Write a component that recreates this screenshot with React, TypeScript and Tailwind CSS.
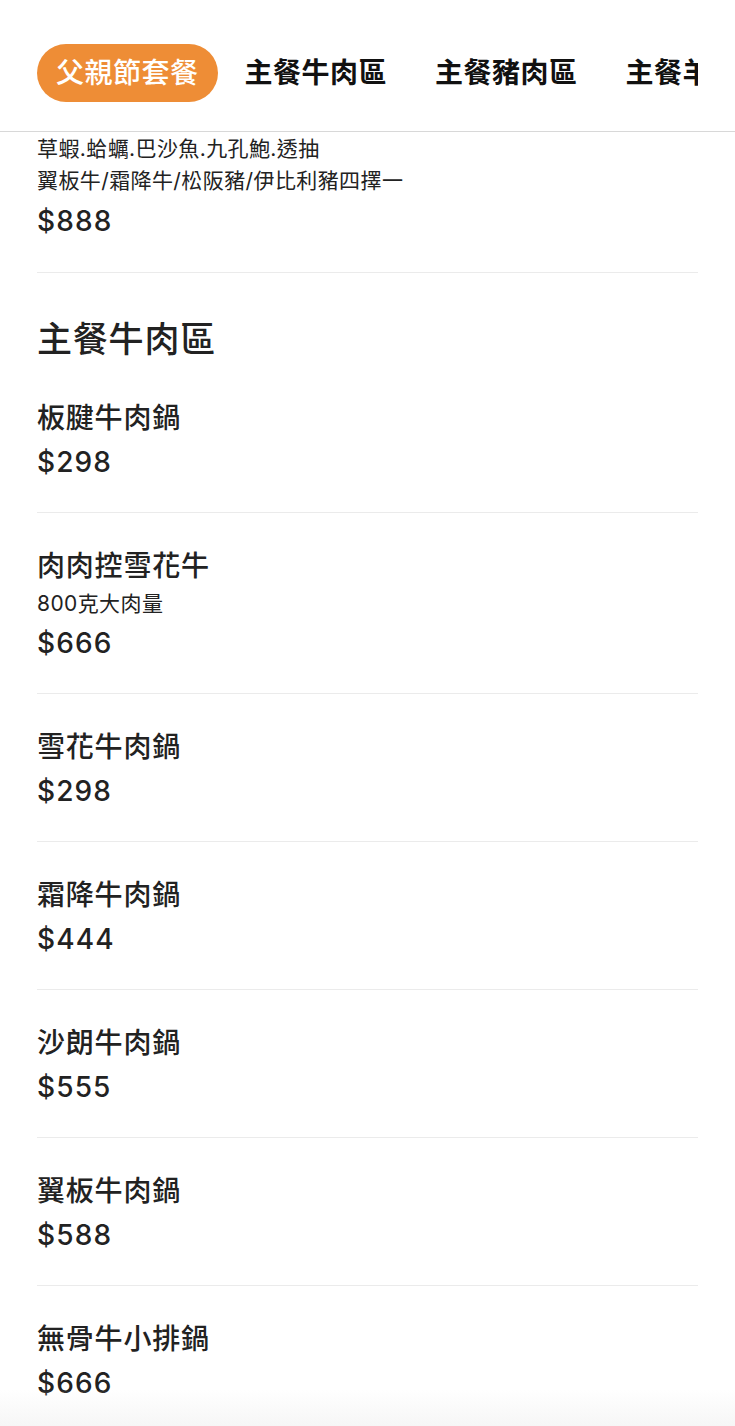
import React from "react";

const font = {
  fontFamily: 'Inter, "Noto Sans CJK TC", "Noto Sans CJK SC", sans-serif',
};

type Item = { name: string; desc?: string; price: string };

const items: Item[] = [
  { name: "板腱牛肉鍋", price: "$298" },
  { name: "肉肉控雪花牛", desc: "800克大肉量", price: "$666" },
  { name: "雪花牛肉鍋", price: "$298" },
  { name: "霜降牛肉鍋", price: "$444" },
  { name: "沙朗牛肉鍋", price: "$555" },
  { name: "翼板牛肉鍋", price: "$588" },
  { name: "無骨牛小排鍋", price: "$666" },
];

function Price({ children }: { children: React.ReactNode }) {
  return (
    <div className="text-[28px] leading-[40px] font-medium tracking-[0.04em] text-[#222]">
      {children}
    </div>
  );
}

function MenuItem({ item, last }: { item: Item; last?: boolean }) {
  return (
    <div
      className={`pt-[33px] pb-[30px] ${last ? "" : "border-b border-[#ebebeb]"}`}
    >
      <div className="text-[28px] leading-[40px] font-medium text-[#222] tracking-[0.8px]">
        {item.name}
      </div>
      {item.desc && (
        <div className="mt-[2px] text-[21px] leading-[32px] text-[#222] tracking-[0.4px]">
          {item.desc}
        </div>
      )}
      <div className={item.desc ? "mt-[3px]" : "mt-[4px]"}>
        <Price>{item.price}</Price>
      </div>
    </div>
  );
}

export default function App() {
  const tabs = ["父親節套餐", "主餐牛肉區", "主餐豬肉區", "主餐羊肉區", "海鮮區"];
  return (
    <div className="relative min-h-[1426px] bg-white overflow-hidden" style={font}>
      <header className="h-[132px] border-b border-[#d8d8d8] flex items-center">
        <div className="mx-[37px] w-[661px] overflow-hidden mt-[15px]">
          <div className="flex whitespace-nowrap">
            {tabs.map((t, i) => (
              <div
                key={t}
                className={`h-[58px] flex items-center rounded-full text-[28px] tracking-[0.5px] shrink-0 ${
                  i === 0
                    ? "bg-[#ee8d36] text-white font-medium px-[19px] mr-[3px]"
                    : "text-[#111] font-bold px-[24px]"
                }`}
              >
                {t}
              </div>
            ))}
          </div>
        </div>
      </header>

      <main className="px-[37px]">
        <div className="pb-[31px] border-b border-[#ebebeb]">
          <div className="text-[21px] leading-[32px] text-[#222] tracking-[0.4px] pt-px">
            草蝦.蛤蠣.巴沙魚.九孔鮑.透抽
          </div>
          <div className="text-[21px] leading-[32px] text-[#222] tracking-[0.4px]">
            翼板牛/霜降牛/松阪豬/伊比利豬四擇一
          </div>
          <div className="mt-[4px]">
            <Price>$888</Price>
          </div>
        </div>

        <h2 className="pt-[42px] text-[35px] leading-[48px] font-medium text-[#222] tracking-[0.8px]">
          主餐牛肉區
        </h2>
        <div className="mt-[2px]">
          {items.map((it, i) => (
            <MenuItem key={i} item={it} last={i === items.length - 1} />
          ))}
        </div>
      </main>

      <div className="pointer-events-none absolute left-0 right-0 top-[1390px] h-[36px] bg-gradient-to-b from-transparent to-[#f6f6f6]" />
    </div>
  );
}
